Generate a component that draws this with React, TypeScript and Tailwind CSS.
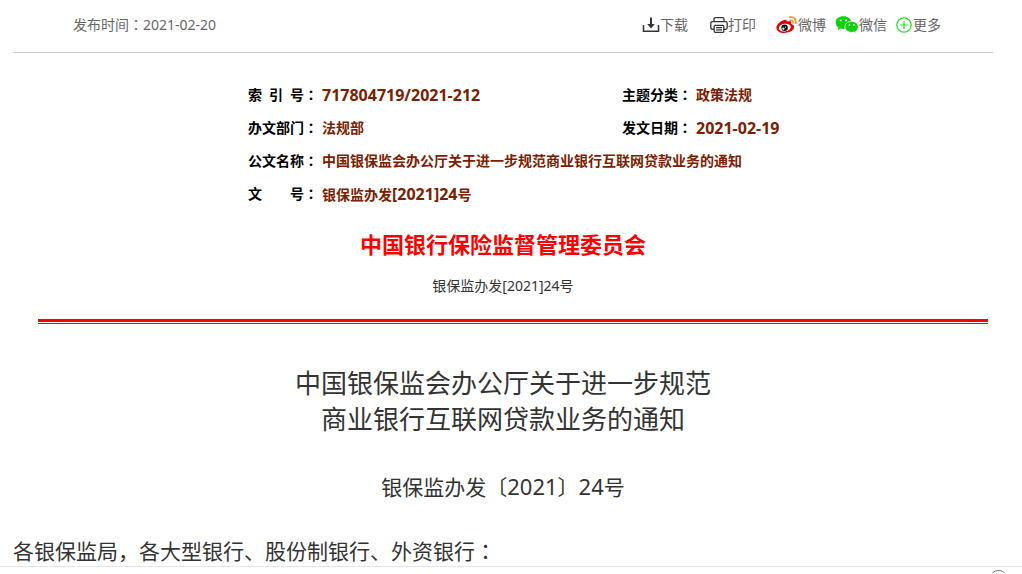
import type { ReactNode } from 'react'

// Full-width colon, set in the face that centres it in its cell
function Colon() {
  return <span lang="zh-TW" className="inline-block w-[1em] font-['Noto_Sans_CJK_TC',sans-serif]">：</span>
}

function DownloadIcon() {
  return (
    <svg width="18" height="16" viewBox="0 0 18 16" fill="none" stroke="#333" strokeWidth="1.5" aria-hidden="true">
      <path d="M1.5 8v6.2h15V8" />
      <path d="M9 0.5v9" strokeWidth="2" />
      <path d="M5.2 7h7.6L9 11.6z" fill="#333" stroke="none" />
    </svg>
  )
}

function PrinterIcon() {
  return (
    <svg width="18" height="16" viewBox="0 0 18 16" fill="none" stroke="#333" strokeWidth="1.3" aria-hidden="true">
      <path d="M4 4.5V2.2q0-1.5 1.5-1.5h7q1.5 0 1.5 1.5v2.3" />
      <path d="M4 12.3H2.6Q.8 12.3.8 10.6V6.3q0-1.7 1.8-1.7h12.8q1.8 0 1.8 1.7v4.3q0 1.7-1.8 1.7H14" />
      <rect x="4.2" y="8.3" width="9.6" height="7" rx="1" />
      <path d="M6 10.7h6M6 12.9h6" />
    </svg>
  )
}

function WeiboIcon() {
  return (
    <svg width="22" height="18" viewBox="0 0 22 18" aria-hidden="true">
      <path
        d="M8.2 4.1c1.5-.6 2.8-.2 2.4 1.5 2.5-1 4.9-.9 4.6 1.7-.1.6.1.8.7 1 2.1.8 2.7 2.5 1.8 4.3-1.5 2.9-5.5 4.4-9.4 4.4C3.7 17 .4 14.9.4 11.7.4 8.5 4.7 5 8.2 4.1z"
        fill="#e60000"
      />
      <ellipse cx="8.8" cy="11.6" rx="6" ry="3.9" fill="#fff" transform="rotate(-8 8.8 11.6)" />
      <circle cx="8.6" cy="11.8" r="3.2" fill="#111" />
      <circle cx="7.4" cy="12.7" r="1.1" fill="#fff" />
      <circle cx="9.6" cy="11.1" r=".6" fill="#fff" />
      <g fill="none" stroke="#f7931e" strokeLinecap="round">
        <path d="M13.9 1.2c4-.7 6.7 2.2 5.8 6" strokeWidth="1.7" />
        <path d="M14.2 4.2c1.9-.3 3.1.9 2.8 2.8" strokeWidth="1.5" />
      </g>
    </svg>
  )
}

function WechatIcon() {
  return (
    <svg width="24" height="18" viewBox="0 0 24 18" aria-hidden="true">
      <path
        d="M8.4.3C4 .3.6 3 .6 6.6c0 2.1 1.1 3.8 2.9 5L2.8 14l2.8-1.4c1 .3 1.8.4 2.8.4 4.4 0 7.9-2.8 7.9-6.4S12.8.3 8.4.3z"
        fill="#0bd20b"
      />
      <path
        d="M16.7 5.4c-3.9 0-6.8 2.4-6.8 5.5s2.9 5.5 6.8 5.5c.8 0 1.6-.1 2.4-.4l2.2 1.3-.6-2.1c1.6-1.1 2.6-2.6 2.6-4.3 0-3.1-2.8-5.5-6.6-5.5z"
        fill="#0bd20b"
        stroke="#fff"
        strokeWidth=".8"
      />
      <g fill="#fff">
        <circle cx="5.8" cy="4.6" r="1" />
        <circle cx="11.1" cy="4.6" r="1" />
        <circle cx="14.4" cy="9" r=".9" />
        <circle cx="19" cy="9" r=".9" />
      </g>
    </svg>
  )
}

function MoreIcon() {
  return (
    <svg width="17" height="16" viewBox="0 0 17 16" fill="none" stroke="#1be01b" strokeWidth="1.2" aria-hidden="true">
      <circle cx="8" cy="8" r="7.2" />
      <path d="M8 4.3v7.4M4.3 8h7.4" />
    </svg>
  )
}

function Action({ icon, label }: { icon: ReactNode, label: string }) {
  return (
    <button type="button" className="flex items-center whitespace-nowrap">
      {icon}
      {label}
    </button>
  )
}

function Label({ children }: { children: ReactNode }) {
  return (
    <th scope="row" className="w-[74px] p-0 text-left text-black">
      <span className="whitespace-pre">{children}</span>
      <Colon />
    </th>
  )
}

function Value({ children, colSpan }: { children: ReactNode, colSpan?: number }) {
  return (
    <td colSpan={colSpan} className="p-0 font-bold text-[#7b2000]">
      {children}
    </td>
  )
}

export default function App() {
  return (
    <div className="bg-white font-['Noto_Sans','Noto_Sans_CJK_SC',sans-serif] text-[#333]" lang="zh-CN">
      <main className="pr-[29px] pl-[13px]">
        <header className="flex items-center justify-between border-b border-[#ccc] pt-3 pr-[52px] pb-[15px] pl-[60px] text-sm leading-6 text-[#666]">
          <p>
            发布时间
            <Colon />
            2021-02-20
          </p>
          <div className="flex items-center">
            <div className="mr-5 flex gap-[22px]">
              <Action icon={<DownloadIcon />} label="下载" />
              <Action icon={<PrinterIcon />} label="打印" />
            </div>
            <div className="flex gap-[9px]">
              <Action icon={<WeiboIcon />} label="微博" />
              <Action icon={<WechatIcon />} label="微信" />
              <Action icon={<MoreIcon />} label="更多" />
            </div>
          </div>
        </header>

        <table className="mx-auto mt-[25px] w-[510px] table-fixed border-collapse text-sm">
          <colgroup>
            <col className="w-[74px]" />
            <col className="w-[300px]" />
            <col className="w-[74px]" />
            <col />
          </colgroup>
          <tbody className="whitespace-nowrap">
            <tr className="h-[33px]">
              <Label>
                <span className="inline-flex w-14 justify-between">
                  <span>索</span>
                  <span>引</span>
                  <span>号</span>
                </span>
              </Label>
              <Value><span className="text-base">717804719/2021-212</span></Value>
              <Label>主题分类</Label>
              <Value>政策法规</Value>
            </tr>
            <tr className="h-[33px]">
              <Label>办文部门</Label>
              <Value>法规部</Value>
              <Label>发文日期</Label>
              <Value><span className="text-base">2021-02-19</span></Value>
            </tr>
            <tr className="h-[33px]">
              <Label>公文名称</Label>
              <Value colSpan={3}>中国银保监会办公厅关于进一步规范商业银行互联网贷款业务的通知</Value>
            </tr>
            <tr className="h-[33px]">
              <Label>
                <span className="inline-flex w-14 justify-between">
                  <span>文</span>
                  <span>号</span>
                </span>
              </Label>
              <Value colSpan={3}>
                银保监办发
                <span className="text-base">[2021]24</span>
                号
              </Value>
            </tr>
          </tbody>
        </table>

        <h2 className="mt-4 text-center text-[22px] leading-9 font-bold text-[#f00]">
          中国银行保险监督管理委员会
        </h2>
        <p className="mt-[14px] text-center text-sm leading-5">银保监办发[2021]24号</p>
        <div className="mt-[23px] mr-[5px] ml-[25px] h-[5px] border-t-3 border-b border-[#f00]" />

        <article>
          <h1 className="mt-[41px] text-center text-[26px] leading-9">
            中国银保监会办公厅关于进一步规范
            <br />
            商业银行互联网贷款业务的通知
          </h1>
          <p className="mt-[31px] text-center text-[21px] leading-9">
            银保监办发〔
            <span className="text-[22px]">2021</span>
            〕
            <span className="text-[22px]">24</span>
            号
          </p>
          <p className="mt-[30px] text-[21px] leading-[30px]">
            各银保监局，各大型银行、股份制银行、外资银行
            <Colon />
          </p>
        </article>
      </main>

      <footer className="flex h-[7px] items-end justify-end overflow-hidden border-t border-[#e5e5e5] pr-[17px]">
        <svg width="13" height="3" viewBox="0 0 13 3" fill="none" stroke="#777" aria-hidden="true">
          <ellipse cx="6.5" cy="6.5" rx="7.5" ry="6" />
        </svg>
      </footer>
    </div>
  )
}
